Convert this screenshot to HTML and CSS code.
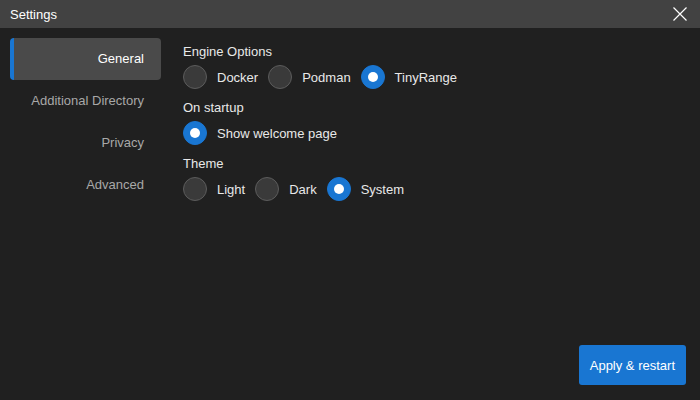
FILE: index.html
```html
<!DOCTYPE html>
<html lang="en">
<head>
    <meta charset="UTF-8">
    <title>Settings</title>
    <link rel="stylesheet" href="styles.css">
</head>
<body>

    <div class="window">
        <div class="titlebar">
            <span class="title">Settings</span>
            <span class="close">
                <svg width="14" height="14" viewBox="0 0 14 14">
                    <path d="M0.5 0.5 L13.5 13.5 M13.5 0.5 L0.5 13.5" stroke="#fff" stroke-width="1.2" fill="none"/>
                </svg>
            </span>
        </div>

        <div class="body">
            <div class="sidebar">
                <div class="tab active">General</div>
                <div class="tab">Additional Directory</div>
                <div class="tab">Privacy</div>
                <div class="tab">Advanced</div>
            </div>

            <div class="content">
                <div class="group-label">Engine Options</div>
                <div class="radio-row">
                    <label class="radio"><span class="dot"></span>Docker</label>
                    <label class="radio"><span class="dot"></span>Podman</label>
                    <label class="radio"><span class="dot checked"></span>TinyRange</label>
                </div>

                <div class="group-label">On startup</div>
                <div class="radio-row">
                    <label class="radio"><span class="dot checked"></span>Show welcome page</label>
                </div>

                <div class="group-label">Theme</div>
                <div class="radio-row">
                    <label class="radio"><span class="dot"></span>Light</label>
                    <label class="radio"><span class="dot"></span>Dark</label>
                    <label class="radio"><span class="dot checked"></span>System</label>
                </div>
            </div>
        </div>

        <div class="footer">
            <button class="apply">Apply &amp; restart</button>
        </div>
    </div>

</body>
</html>
```

FILE: styles.css
```css
html, body {
    margin: 0;
    height: 100%;
}

body {
    background-color: #202020;
    color: #e8e8e8;
    font-family: "Liberation Sans", Arial, sans-serif;
    font-size: 13px;
}

.window {
    height: 400px;
    display: flex;
    flex-direction: column;
}

.titlebar {
    height: 28px;
    background-color: #424242;
    display: flex;
    align-items: center;
    justify-content: space-between;
    padding: 0 13px 0 10px;
    color: #fff;
}

.close {
    display: flex;
}

.body {
    flex: 1;
    display: flex;
    padding: 10px 10px 0 10px;
}

.sidebar {
    width: 151px;
    display: flex;
    flex-direction: column;
}

.tab {
    height: 42px;
    line-height: 42px;
    text-align: right;
    padding-right: 17px;
    color: #a8a8a8;
    border-left: 4px solid transparent;
    border-radius: 4px;
}

.tab.active {
    background-color: #4a4a4a;
    border-left-color: #1976d2;
    color: #fff;
}

.content {
    padding-left: 22px;
    padding-top: 6px;
}

.group-label {
    line-height: 16px;
    margin-bottom: 5px;
}

.radio-row {
    display: flex;
    align-items: center;
    height: 24px;
    margin-bottom: 11px;
}

.radio {
    display: flex;
    align-items: center;
    margin-right: 10px;
}

.dot {
    width: 22px;
    height: 22px;
    border: 1px solid #5c5c5c;
    border-radius: 50%;
    background-color: #3a3a3a;
    margin-right: 10px;
    position: relative;
}

.dot.checked {
    background-color: #1976d2;
    border-color: #1976d2;
}

.dot.checked::after {
    content: "";
    position: absolute;
    left: 6px;
    top: 6px;
    width: 10px;
    height: 10px;
    border-radius: 50%;
    background-color: #fff;
}

.footer {
    display: flex;
    justify-content: flex-end;
    padding: 0 14px 15px 0;
}

.apply {
    background-color: #1976d2;
    color: #fff;
    border: none;
    border-radius: 3px;
    height: 40px;
    padding: 0 11px;
    font-family: "Liberation Sans", Arial, sans-serif;
    font-size: 13px;
}
```
